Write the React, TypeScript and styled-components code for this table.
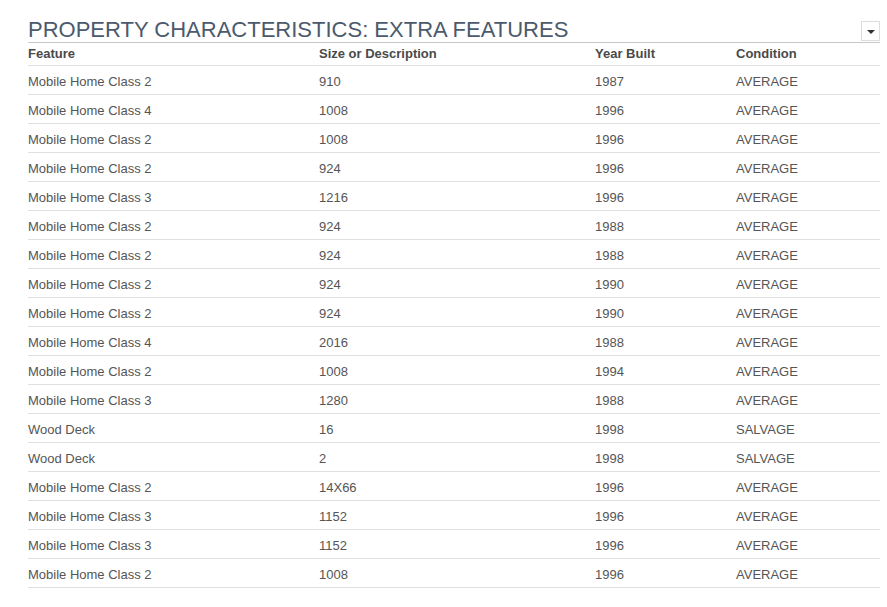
import React from "react";
import styled, { createGlobalStyle } from "styled-components";

const Global = createGlobalStyle`
  html, body { margin: 0; padding: 0; background: #fff; }
  body { font-family: "Liberation Sans", Arial, sans-serif; }
`;

const Page = styled.div`
  padding: 0 7px 0 28px;
  width: 852px;
`;

const TitleBar = styled.div`
  display: flex;
  justify-content: space-between;
  align-items: flex-end;
  padding-top: 17px;
  border-bottom: 1px solid #c8c8c8;
  height: 25px;
`;

const Title = styled.h2`
  margin: 0;
  font-size: 22px;
  line-height: 25px;
  font-weight: normal;
  color: #4b5a6c;
  letter-spacing: 0;
`;

const Toggle = styled.button`
  box-sizing: border-box;
  display: flex;
  align-items: center;
  justify-content: center;
  width: 19px;
  height: 20px;
  margin-bottom: 1px;
  padding: 0;
  background: #fff;
  border: 1px solid #dcdcdc;
`;

const Arrow = styled.span`
  width: 0;
  height: 0;
  border-left: 4px solid transparent;
  border-right: 4px solid transparent;
  border-top: 4px solid #333;
  margin-top: 2px;
`;

const Row = styled.div<{ $head?: boolean }>`
  display: grid;
  grid-template-columns: 291px 276px 141px 1fr;
  align-items: center;
  height: ${(p) => (p.$head ? "20px" : "26px")};
  border-bottom: 1px solid #e0e0e0;
  font-size: 13px;
  font-weight: ${(p) => (p.$head ? "bold" : "normal")};
  color: ${(p) => (p.$head ? "#4a4a4a" : "#555")};
  padding: ${(p) => (p.$head ? "0 0 2px" : "2px 0 0")};
`;

const Cell = styled.div`
  white-space: nowrap;
`;

const rows: [string, string, string, string][] = [
  ["Mobile Home Class 2", "910", "1987", "AVERAGE"],
  ["Mobile Home Class 4", "1008", "1996", "AVERAGE"],
  ["Mobile Home Class 2", "1008", "1996", "AVERAGE"],
  ["Mobile Home Class 2", "924", "1996", "AVERAGE"],
  ["Mobile Home Class 3", "1216", "1996", "AVERAGE"],
  ["Mobile Home Class 2", "924", "1988", "AVERAGE"],
  ["Mobile Home Class 2", "924", "1988", "AVERAGE"],
  ["Mobile Home Class 2", "924", "1990", "AVERAGE"],
  ["Mobile Home Class 2", "924", "1990", "AVERAGE"],
  ["Mobile Home Class 4", "2016", "1988", "AVERAGE"],
  ["Mobile Home Class 2", "1008", "1994", "AVERAGE"],
  ["Mobile Home Class 3", "1280", "1988", "AVERAGE"],
  ["Wood Deck", "16", "1998", "SALVAGE"],
  ["Wood Deck", "2", "1998", "SALVAGE"],
  ["Mobile Home Class 2", "14X66", "1996", "AVERAGE"],
  ["Mobile Home Class 3", "1152", "1996", "AVERAGE"],
  ["Mobile Home Class 3", "1152", "1996", "AVERAGE"],
  ["Mobile Home Class 2", "1008", "1996", "AVERAGE"],
];

export default function App() {
  return (
    <>
      <Global />
      <Page>
        <TitleBar>
          <Title>PROPERTY CHARACTERISTICS: EXTRA FEATURES</Title>
          <Toggle aria-label="toggle">
            <Arrow />
          </Toggle>
        </TitleBar>
        <Row $head>
          <Cell>Feature</Cell>
          <Cell>Size or Description</Cell>
          <Cell>Year Built</Cell>
          <Cell>Condition</Cell>
        </Row>
        {rows.map((r, i) => (
          <Row key={i}>
            {r.map((c, j) => (
              <Cell key={j}>{c}</Cell>
            ))}
          </Row>
        ))}
      </Page>
    </>
  );
}
